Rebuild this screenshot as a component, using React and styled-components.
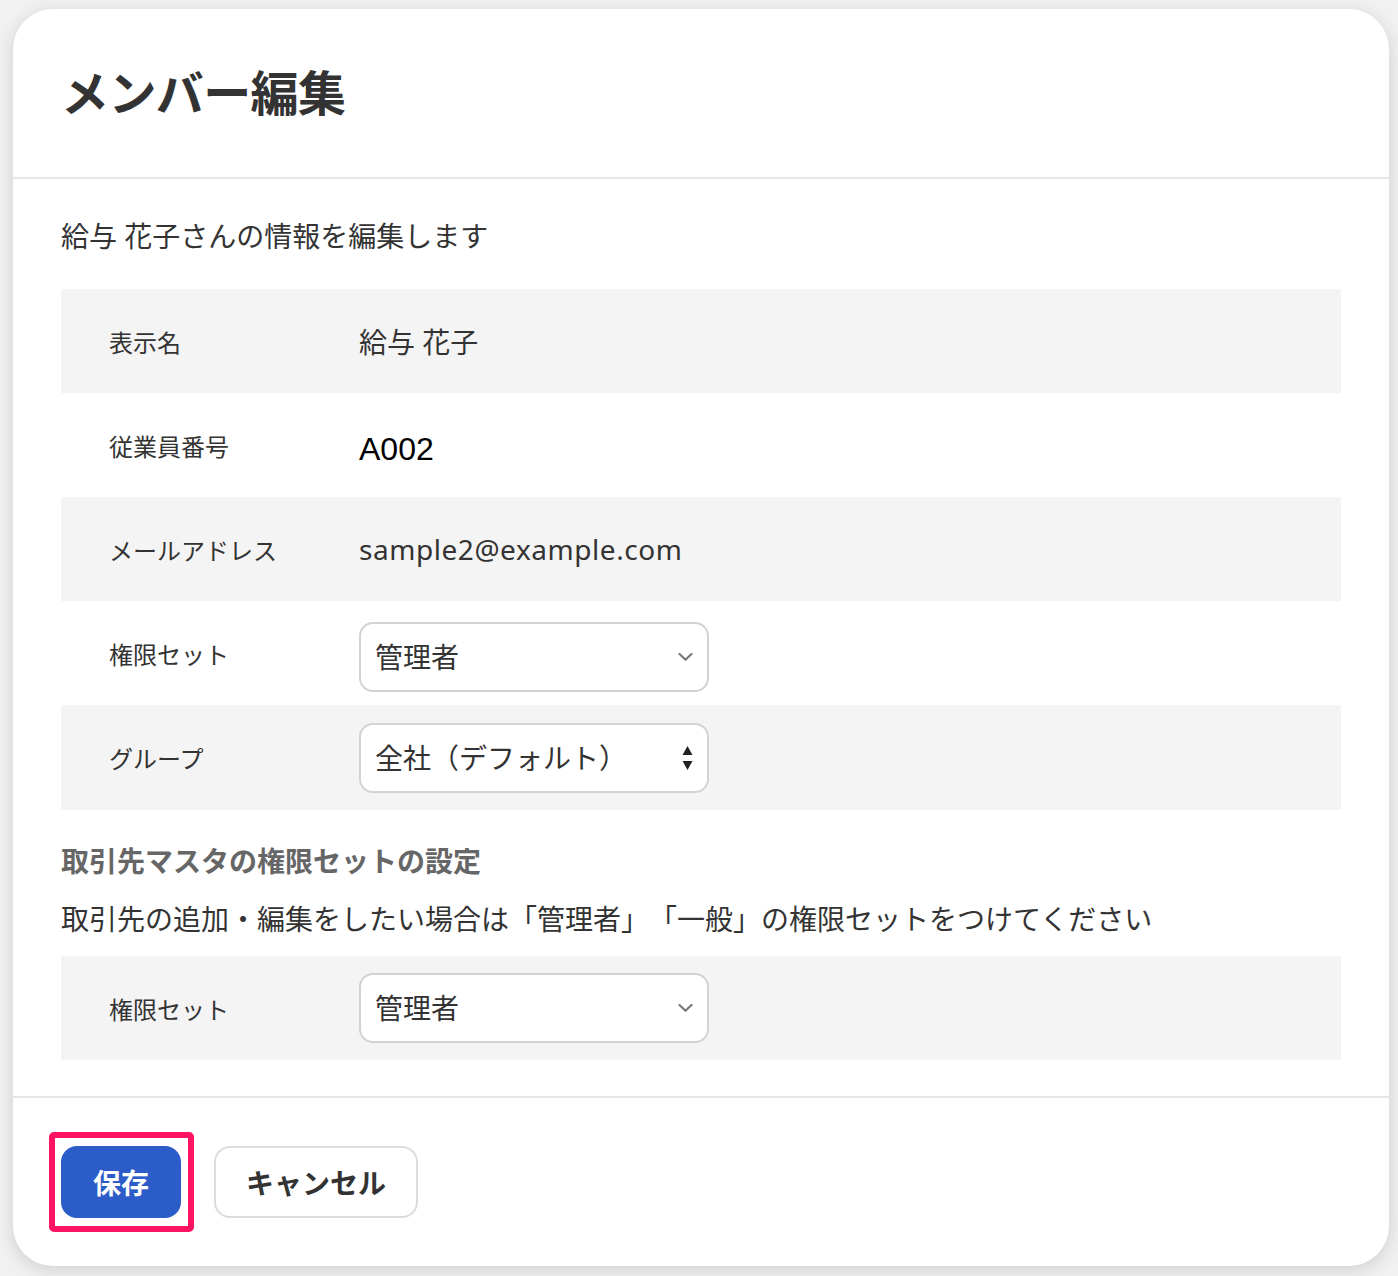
import styled, { createGlobalStyle } from "styled-components";

const GlobalStyle = createGlobalStyle`
  body {
    margin: 0;
    background: #f1f1f1;
    font-family: "Noto Sans", "Noto Sans CJK JP", sans-serif;
    color: #333;
    text-spacing-trim: space-all;
  }
`;

const Page = styled.div`
  padding: 9px 9px 10px 13px;
`;

const Card = styled.div`
  background: #fff;
  border-radius: 40px;
  box-shadow: 0 4px 18px rgba(0, 0, 0, 0.14);
  overflow: hidden;
`;

const Header = styled.header`
  padding: 48px;
  border-bottom: 2px solid #e6e6e6;
`;

const Title = styled.h1`
  margin: 0;
  font-size: 48px;
  line-height: 72px;
  font-weight: 700;
  letter-spacing: -0.6px;
  color: #333;
`;

const Body = styled.div`
  padding: 36px 48px 36px;
  border-bottom: 2px solid #e6e6e6;
`;

const Lead = styled.p`
  margin: 0 0 32px;
  font-size: 28px;
  line-height: 42px;
`;

const Table = styled.div`
  display: flex;
  flex-direction: column;
`;

const Row = styled.div`
  display: grid;
  grid-template-columns: 250px 1fr;
  align-items: center;
  height: ${(p) => p.$height || 104}px;
  padding-left: 48px;
  background: ${(p) => (p.$shaded ? "#f5f4f4" : "#fff")};
`;

const Label = styled.div`
  font-size: 24px;
  color: #333;
`;

const Value = styled.div`
  font-size: 28px;
  color: #333;
  letter-spacing: ${(p) => (p.$latin ? "0.55px" : "normal")};
`;

const Code = styled.div`
  margin-top: 8px;
  font-family: "Liberation Sans", sans-serif;
  font-size: 32px;
  color: #000;
`;

const SelectWrap = styled.div`
  position: relative;
  width: 350px;
  margin-top: ${(p) => p.$nudge || 0}px;
`;

const Select = styled.select`
  appearance: none;
  display: block;
  width: 100%;
  height: 70px;
  box-sizing: border-box;
  padding: 0 48px 0 14px;
  border: 2px solid #d6d2d2;
  border-radius: 14px;
  background: #fff;
  font-family: "Noto Sans", "Noto Sans CJK JP", sans-serif;
  font-size: 28px;
  color: #333;
`;

const SelectIcon = styled.svg`
  position: absolute;
  top: 50%;
  right: ${(p) => p.$right}px;
  transform: translateY(-50%);
  pointer-events: none;
`;

const SectionTitle = styled.h2`
  margin: 30px 0 0;
  font-size: 28px;
  line-height: 42px;
  font-weight: 700;
  color: #666;
`;

const Note = styled.p`
  margin: 16px 0 16px;
  font-size: 28px;
  line-height: 42px;
  color: #333;
`;

const Footer = styled.footer`
  display: flex;
  gap: 33px;
  padding: 48px;
`;

const Highlight = styled.span`
  position: relative;
  display: inline-flex;

  &::after {
    content: "";
    position: absolute;
    inset: -14px -13px -14px -12px;
    border: 6px solid #ff1464;
    border-radius: 5px;
    pointer-events: none;
  }
`;

const Button = styled.button`
  height: 72px;
  padding: 0 30px;
  border-radius: 16px;
  font-family: "Noto Sans", "Noto Sans CJK JP", sans-serif;
  font-size: 28px;
  font-weight: 700;
  cursor: pointer;
  border: 2px solid ${(p) => (p.$primary ? "#2b5cc8" : "#dcdcdc")};
  background: ${(p) => (p.$primary ? "#2b5cc8" : "#fff")};
  color: ${(p) => (p.$primary ? "#fff" : "#333")};
`;

const Chevron = () => (
  <SelectIcon $right={16} width="15" height="9" viewBox="0 0 15 9">
    <path d="M1.5 1.5 7.5 7.2l6-5.7" fill="none" stroke="#777" strokeWidth="2.2" strokeLinecap="round" strokeLinejoin="round" />
  </SelectIcon>
);

const Stepper = () => (
  <SelectIcon $right={16} width="11" height="24" viewBox="0 0 11 24">
    <path d="M5.5 0 10.5 9H0.5Z" fill="#222" />
    <path d="M5.5 24 10.5 15H0.5Z" fill="#222" />
  </SelectIcon>
);

const Dropdown = ({ value, stepper, nudge }) => (
  <SelectWrap $nudge={nudge}>
    <Select defaultValue={value}>
      <option>{value}</option>
    </Select>
    {stepper ? <Stepper /> : <Chevron />}
  </SelectWrap>
);

export default function App() {
  return (
    <>
      <GlobalStyle />
      <Page>
        <Card>
          <Header>
            <Title>メンバー編集</Title>
          </Header>
          <Body>
            <Lead>給与 花子さんの情報を編集します</Lead>
            <Table>
              <Row $shaded>
                <Label>表示名</Label>
                <Value>給与 花子</Value>
              </Row>
              <Row>
                <Label>従業員番号</Label>
                <Code>A002</Code>
              </Row>
              <Row $shaded>
                <Label>メールアドレス</Label>
                <Value $latin>sample2@example.com</Value>
              </Row>
              <Row>
                <Label>権限セット</Label>
                <Dropdown value="管理者" nudge={8} />
              </Row>
              <Row $shaded $height={105}>
                <Label>グループ</Label>
                <Dropdown value="全社（デフォルト）" stepper />
              </Row>
            </Table>
            <SectionTitle>取引先マスタの権限セットの設定</SectionTitle>
            <Note>取引先の追加・編集をしたい場合は「管理者」「一般」の権限セットをつけてください</Note>
            <Table>
              <Row $shaded>
                <Label>権限セット</Label>
                <Dropdown value="管理者" />
              </Row>
            </Table>
          </Body>
          <Footer>
            <Highlight>
              <Button $primary>保存</Button>
            </Highlight>
            <Button>キャンセル</Button>
          </Footer>
        </Card>
      </Page>
    </>
  );
}
